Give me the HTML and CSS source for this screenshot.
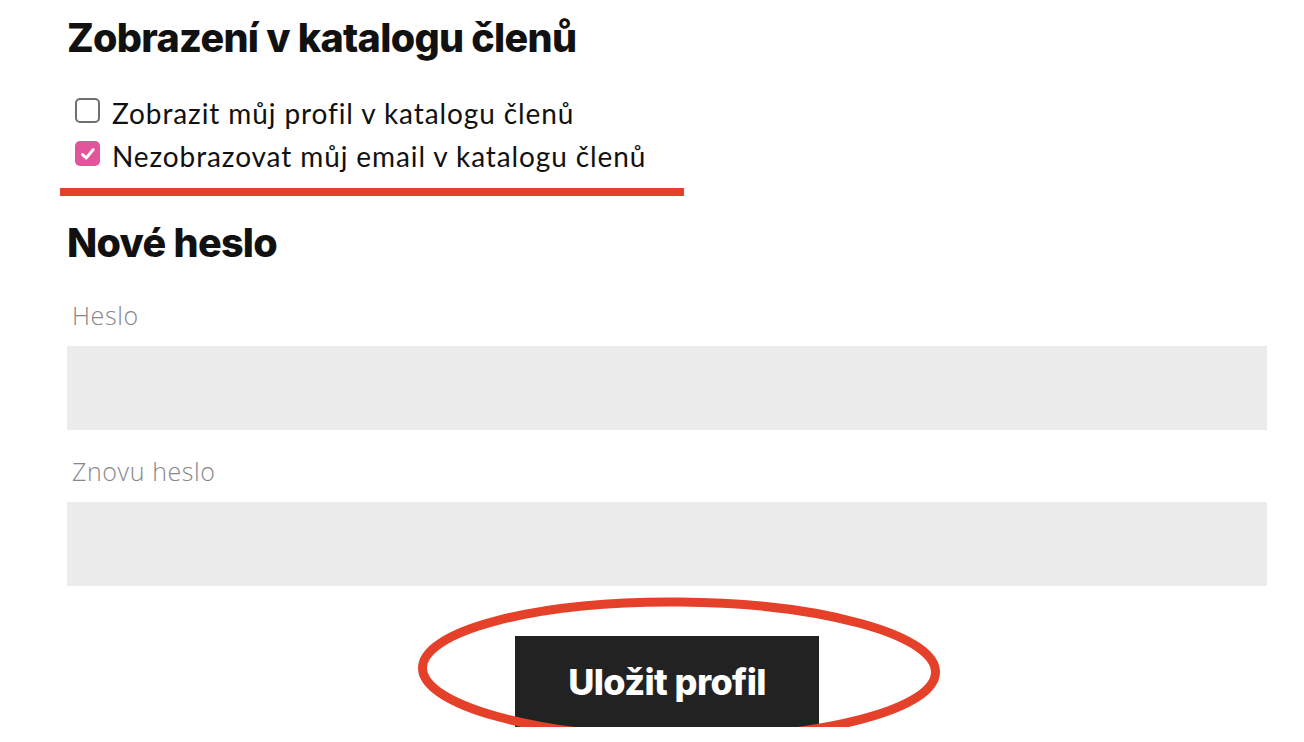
FILE: index.html
```html
<!DOCTYPE html>
<html lang="cs">
<head>
  <meta charset="UTF-8" />
  <meta name="viewport" content="width=device-width, initial-scale=1" />
  <title>Profil</title>
  <link rel="stylesheet" href="styles.css">
</head>
<body>
  <div class="page">
    <h2 class="section-title first">Zobrazení v katalogu členů</h2>

    <label class="check">
      <span class="box"></span>
      Zobrazit můj profil v katalogu členů
    </label>
    <label class="check">
      <span class="box checked">
        <svg width="18" height="18" viewBox="0 0 18 18"><path d="M3.6 9.6 L7.2 13 L14.2 4.6" fill="none" stroke="#fff" stroke-width="3" stroke-linecap="round" stroke-linejoin="round"/></svg>
      </span>
      Nezobrazovat můj email v katalogu členů
    </label>

    <div class="red-line"></div>

    <h2 class="section-title">Nové heslo</h2>

    <div class="field">
      <label class="field-label">Heslo</label>
      <div class="field-input"></div>
    </div>
    <div class="field">
      <label class="field-label">Znovu heslo</label>
      <div class="field-input"></div>
    </div>

    <div class="actions">
      <button class="save-btn">Uložit profil</button>
      <svg class="ring" width="540" height="160" viewBox="0 0 540 160">
        <ellipse cx="270" cy="80" rx="256.5" ry="68" fill="none" stroke="#e5402a" stroke-width="9" transform="rotate(0.5 270 80)"/>
      </svg>
    </div>
  </div>
</body>
</html>
```

FILE: styles.css
```css
body {
  margin: 0;
  background: #fff;
  font-family: 'Lato', sans-serif;
  color: #111;
}

.page {
  padding: 14px 37px 0 67px;
}

.section-title {
  font-family: 'Inter', sans-serif;
  font-weight: 800;
  font-size: 39.5px;
  letter-spacing: -0.7px;
  line-height: 48px;
  margin: 0;
  color: #111;
}

.section-title.first {
  margin-bottom: 30px;
}

.check {
  display: flex;
  align-items: center;
  gap: 12px;
  font-size: 28px;
  letter-spacing: 0.9px;
  line-height: 43px;
  padding-left: 8px;
  color: #111;
}

.box {
  flex: none;
  width: 25px;
  height: 25px;
  margin-bottom: 6px;
  border: 2px solid #6f6f6f;
  border-radius: 5px;
  box-sizing: border-box;
  display: flex;
  align-items: center;
  justify-content: center;
}

.box.checked {
  background: #e0559c;
  border: none;
}

.red-line {
  height: 8px;
  background: #e5402a;
  width: 624px;
  margin: 10px 0 23px -7px;
}

.field {
  margin-top: 33px;
}

.field + .field {
  margin-top: 26px;
}

.field-label {
  display: block;
  font-family: 'Open Sans', sans-serif;
  font-weight: 300;
  font-size: 25px;
  letter-spacing: 0.6px;
  line-height: 30px;
  color: #888;
  padding-left: 5px;
  margin-bottom: 16px;
}

.field-input {
  height: 84px;
  background: #ececec;
}

.actions {
  position: relative;
  display: flex;
  justify-content: center;
  margin-top: 50px;
}

.save-btn {
  width: 304px;
  height: 91px;
  background: #222;
  color: #fff;
  border: none;
  font-family: 'Inter', sans-serif;
  font-weight: 800;
  font-size: 36px;
  letter-spacing: -0.6px;
  padding-top: 2px;
}

.ring {
  position: absolute;
  left: 342px;
  top: -46px;
}
```
